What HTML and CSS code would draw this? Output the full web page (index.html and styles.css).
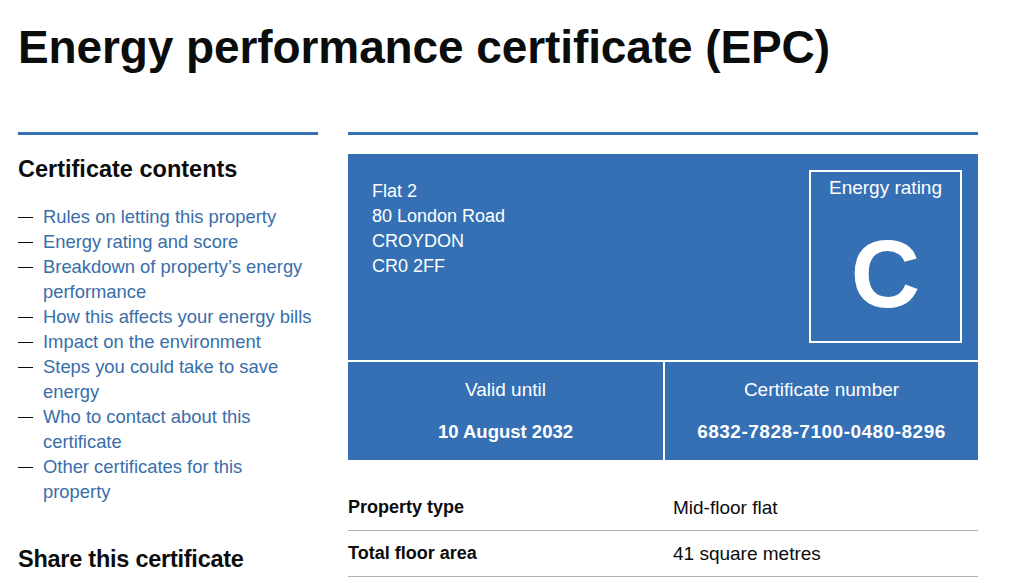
FILE: index.html
```html
<!DOCTYPE html>
<html lang="en">
<head>
<meta charset="utf-8">
<title>Energy performance certificate (EPC)</title>
<link rel="stylesheet" href="styles.css">
</head>
<body>
<div class="page">
  <h1 class="title">Energy performance certificate (EPC)</h1>
  <div class="layout">
    <aside class="sidebar">
      <h2 class="side-heading">Certificate contents</h2>
      <ul class="contents">
        <li><a href="#">Rules on letting this property</a></li>
        <li><a href="#">Energy rating and score</a></li>
        <li><a href="#">Breakdown of property’s energy performance</a></li>
        <li><a href="#">How this affects your energy bills</a></li>
        <li><a href="#">Impact on the environment</a></li>
        <li><a href="#">Steps you could take to save energy</a></li>
        <li><a href="#">Who to contact about this certificate</a></li>
        <li><a href="#">Other certificates for this<br>property</a></li>
      </ul>
      <h2 class="side-heading share">Share this certificate</h2>
    </aside>
    <main class="main">
      <div class="epc">
        <div class="epc-top">
          <p class="address">Flat 2<br>80 London Road<br>CROYDON<br>CR0 2FF</p>
          <div class="rating">
            <span class="rating-label">Energy rating</span>
            <span class="rating-letter">C</span>
          </div>
        </div>
        <div class="epc-cell">
          <span class="cell-label">Valid until</span>
          <span class="cell-value">10 August 2032</span>
        </div>
        <div class="epc-cell">
          <span class="cell-label">Certificate number</span>
          <span class="cell-value cert-number">6832-7828-7100-0480-8296</span>
        </div>
      </div>
      <dl class="summary">
        <div class="summary-row">
          <dt class="summary-key">Property type</dt>
          <dd class="summary-value">Mid-floor flat</dd>
        </div>
        <div class="summary-row">
          <dt class="summary-key">Total floor area</dt>
          <dd class="summary-value">41 square metres</dd>
        </div>
      </dl>
    </main>
  </div>
</div>
</body>
</html>
```

FILE: styles.css
```css
* { box-sizing: border-box; }

html, body {
  margin: 0;
  padding: 0;
  background: #ffffff;
}

body {
  font-family: "Liberation Sans", Arial, sans-serif;
  color: #0b0c0c;
}

.page {
  padding-left: 18px;
  width: 978px;
}

.title {
  margin: 22px 0 60px;
  font-size: 46px;
  line-height: 50px;
  font-weight: 700;
  letter-spacing: -0.1px;
}

.layout {
  display: grid;
  grid-template-columns: 300px 630px;
  column-gap: 30px;
  align-items: start;
}

.sidebar {
  border-top: 3px solid #3570b4;
  padding-top: 19px;
}

.side-heading {
  margin: 0;
  font-size: 23.5px;
  line-height: 30px;
  font-weight: 700;
}

.side-heading.share {
  margin-top: 40px;
  letter-spacing: -0.25px;
}

.contents {
  list-style: none;
  margin: 20px 0 0;
  padding: 0;
}

.contents li {
  display: grid;
  grid-template-columns: 25px 1fr;
  font-size: 18.4px;
  line-height: 25px;
}

.contents li::before {
  content: "";
  display: block;
  width: 15px;
  height: 1px;
  margin-top: 13px;
  background: #0b0c0c;
}

.contents a {
  color: #386ea9;
  text-decoration: none;
}

.main {
  border-top: 3px solid #3570b4;
  padding-top: 19px;
}

.epc {
  display: grid;
  grid-template-columns: 315px 313px;
  gap: 2px;
  background: #ffffff;
  color: #ffffff;
}

.epc-top {
  grid-column: 1 / 3;
  display: flex;
  justify-content: space-between;
  align-items: flex-start;
  background: #3570b4;
  padding: 16px 16px 17px 24px;
}

.address {
  margin: 9px 0 0;
  font-size: 18px;
  line-height: 25px;
}

.rating {
  width: 153px;
  height: 173px;
  border: 2px solid #ffffff;
  display: flex;
  flex-direction: column;
  align-items: center;
  padding-top: 3px;
}

.rating-label {
  font-size: 19px;
  line-height: 25px;
}

.rating-letter {
  margin-top: 26px;
  font-size: 96px;
  line-height: 96px;
  font-weight: 700;
}

.epc-cell {
  background: #3570b4;
  display: flex;
  flex-direction: column;
  align-items: center;
  padding: 15px 0 15px;
  height: 98px;
}

.cell-label {
  font-size: 19px;
  line-height: 25px;
}

.cell-value {
  margin-top: 17px;
  font-size: 18.5px;
  line-height: 25px;
  font-weight: 700;
}

.cert-number {
  font-size: 19px;
  letter-spacing: 0.5px;
}

.summary {
  margin: 25px 0 0;
}

.summary-row {
  display: grid;
  grid-template-columns: 325px 1fr;
  padding: 10px 0;
  border-bottom: 1px solid #b1b4b6;
}

.summary-key {
  font-size: 18px;
  line-height: 25px;
  font-weight: 700;
}

.summary-value {
  margin: 0;
  font-size: 19px;
  line-height: 25px;
}
```
